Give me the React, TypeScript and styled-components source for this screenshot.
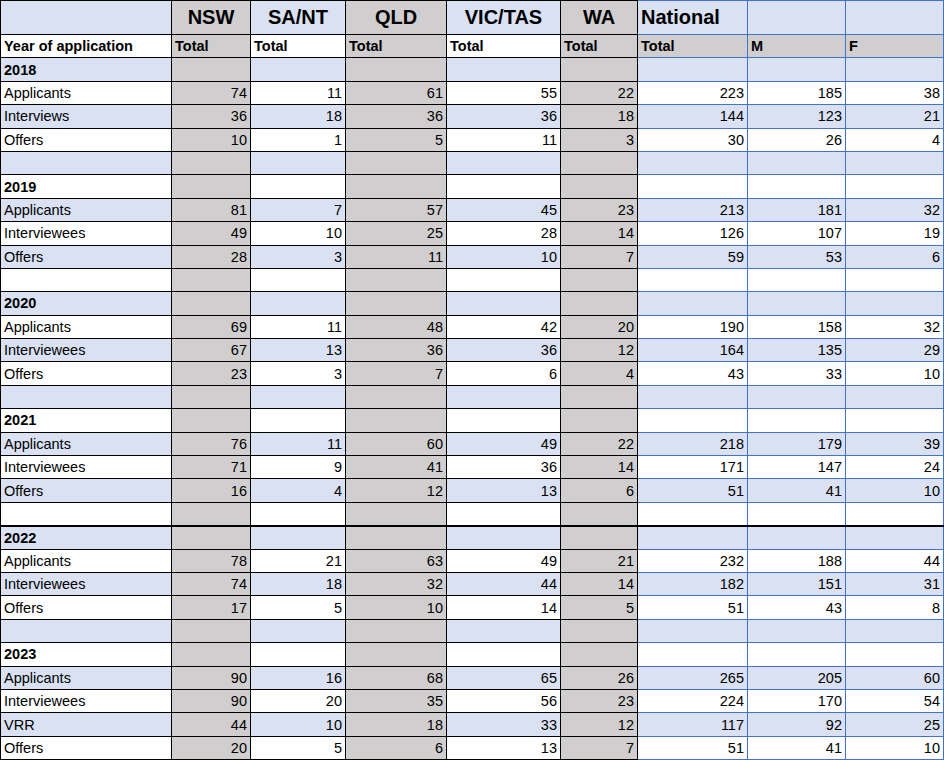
import React from 'react';
import styled, {createGlobalStyle} from 'styled-components';

const Global = createGlobalStyle`
  body { margin: 0; background: #fff; font-family: "Liberation Sans", Arial, sans-serif; }
`;

const BLUE = '#d9e1f2';
const GREY = '#d0cece';
const widths = [171, 79, 95, 101, 114, 77, 110, 98, 98];
const greyCols = [1, 3, 5];

const Sheet = styled.table`
  border-collapse: collapse;
  table-layout: fixed;
  width: 943px;
  font-size: 14.5px;
  color: #000;
`;

const Cell = styled.td<{ $bg: string; $blue?: boolean; $right?: boolean; $bold?: boolean; $thick?: boolean; $h: number }>`
  height: ${p => p.$h}px;
  padding: 0 3px;
  background: ${p => p.$bg};
  border: 1px solid ${p => (p.$blue ? '#4472c4' : '#000')};
  ${p => p.$thick && 'border-top: 2px solid #000;'}
  text-align: ${p => (p.$right ? 'right' : 'left')};
  font-weight: ${p => (p.$bold ? 700 : 400)};
  white-space: nowrap;
  overflow: hidden;
  box-sizing: border-box;
`;

const HeadCell = styled(Cell)`
  font-size: 20px;
  text-align: center;
`;

type Row = { label: string; vals?: number[]; year?: boolean };

const groups: [string, [string, number[]][]][] = [
  ['2018', [
    ['Applicants', [74, 11, 61, 55, 22, 223, 185, 38]],
    ['Interviews', [36, 18, 36, 36, 18, 144, 123, 21]],
    ['Offers', [10, 1, 5, 11, 3, 30, 26, 4]],
  ]],
  ['2019', [
    ['Applicants', [81, 7, 57, 45, 23, 213, 181, 32]],
    ['Interviewees', [49, 10, 25, 28, 14, 126, 107, 19]],
    ['Offers', [28, 3, 11, 10, 7, 59, 53, 6]],
  ]],
  ['2020', [
    ['Applicants', [69, 11, 48, 42, 20, 190, 158, 32]],
    ['Interviewees', [67, 13, 36, 36, 12, 164, 135, 29]],
    ['Offers', [23, 3, 7, 6, 4, 43, 33, 10]],
  ]],
  ['2021', [
    ['Applicants', [76, 11, 60, 49, 22, 218, 179, 39]],
    ['Interviewees', [71, 9, 41, 36, 14, 171, 147, 24]],
    ['Offers', [16, 4, 12, 13, 6, 51, 41, 10]],
  ]],
  ['2022', [
    ['Applicants', [78, 21, 63, 49, 21, 232, 188, 44]],
    ['Interviewees', [74, 18, 32, 44, 14, 182, 151, 31]],
    ['Offers', [17, 5, 10, 14, 5, 51, 43, 8]],
  ]],
  ['2023', [
    ['Applicants', [90, 16, 68, 65, 26, 265, 205, 60]],
    ['Interviewees', [90, 20, 35, 56, 23, 224, 170, 54]],
    ['VRR', [44, 10, 18, 33, 12, 117, 92, 25]],
    ['Offers', [20, 5, 6, 13, 7, 51, 41, 10]],
  ]],
];

const rows: Row[] = [];
groups.forEach(([y, items], gi) => {
  rows.push({label: y, year: true});
  items.forEach(([label, vals]) => rows.push({label, vals}));
  if (gi < groups.length - 1) rows.push({label: ''});
});

const H = 23.4;

export default function App() {
  return (
    <>
      <Global/>
      <Sheet>
        <colgroup>
          {widths.map((w, i) => <col key={i} style={{width: w}}/>)}
        </colgroup>
        <tbody>
          <tr>
            {['', 'NSW', 'SA/NT', 'QLD', 'VIC/TAS', 'WA', 'National', '', ''].map((t, i) => (
              <HeadCell key={i} $h={34} $bold $blue={i >= 6}
                        $bg={greyCols.includes(i) ? GREY : BLUE}
                        style={i === 6 ? {textAlign: 'left'} : undefined}>{t}</HeadCell>
            ))}
          </tr>
          <tr>
            {['Year of application', 'Total', 'Total', 'Total', 'Total', 'Total', 'Total', 'M', 'F'].map((t, i) => (
              <Cell key={i} $h={H} $bold $blue={i >= 6}
                    $bg={greyCols.includes(i) || i >= 6 ? GREY : '#fff'}>{t}</Cell>
            ))}
          </tr>
          {rows.map((r, ri) => {
            const rowBg = ri % 2 === 0 ? BLUE : '#fff';
            const thick = r.year && r.label === '2022';
            return (
              <tr key={ri}>
                <Cell $h={H} $bg={rowBg} $bold={r.year} $thick={thick}>{r.label}</Cell>
                {Array.from({length: 8}, (_, k) => {
                  const i = k + 1;
                  return (
                    <Cell key={i} $h={H} $right $thick={thick} $blue={i >= 6}
                          $bg={greyCols.includes(i) ? GREY : rowBg}>
                      {r.vals ? r.vals[k] : ''}
                    </Cell>
                  );
                })}
              </tr>
            );
          })}
        </tbody>
      </Sheet>
    </>
  );
}
